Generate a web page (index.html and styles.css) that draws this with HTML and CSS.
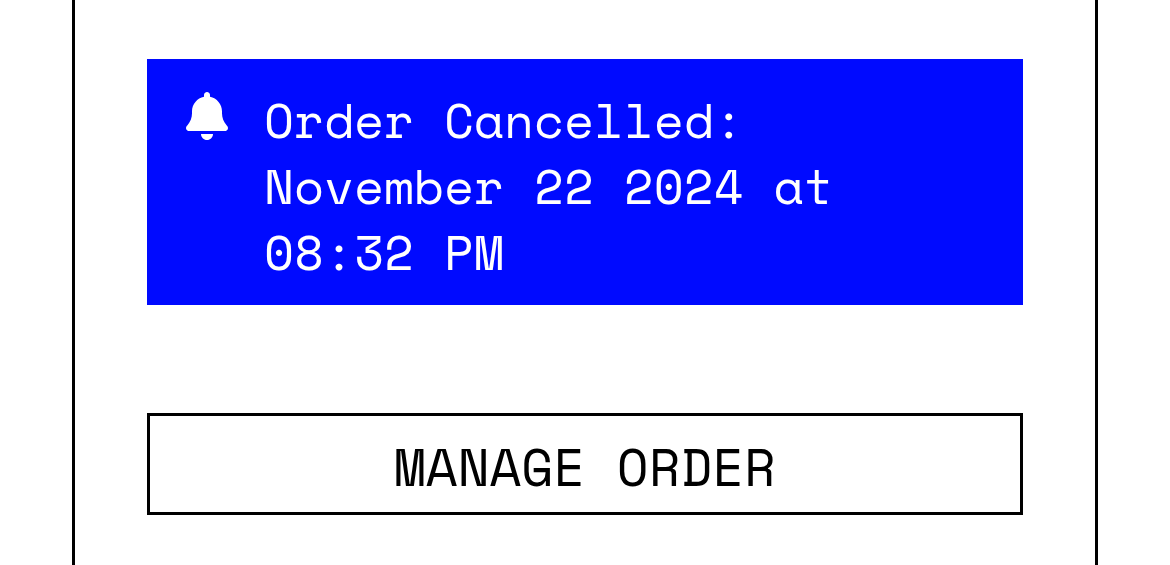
FILE: index.html
```html
<!DOCTYPE html>
<html lang="en">
<head>
    <meta charset="UTF-8">
    <meta name="viewport" content="width=device-width, initial-scale=1.0">
    <title>Order Status</title>
    <link rel="stylesheet" href="styles.css">
</head>
<body>

<main class="order-panel">
    <div class="notice" role="status">
        <svg class="notice-icon" xmlns="http://www.w3.org/2000/svg" viewBox="0 0 448 512" aria-hidden="true">
            <path d="M224 0c-17.7 0-32 14.3-32 32V51.2C119 66 64 130.6 64 208v18.8c0 47-17.3 92.4-48.5 127.6l-7.4 8.3c-8.4 9.4-10.4 22.9-5.3 34.4S19.4 416 32 416H416c12.6 0 24-7.4 29.2-18.9s3.1-25-5.3-34.4l-7.4-8.3C401.3 319.2 384 273.9 384 226.8V208c0-77.4-55-142-128-156.8V32c0-17.7-14.3-32-32-32zm45.3 493.3c12-12 18.7-28.3 18.7-45.3H224 160c0 17 6.7 33.3 18.7 45.3s28.3 18.7 45.3 18.7s33.3-6.7 45.3-18.7z"/>
        </svg>
        <p class="notice-text">Order Cancelled: November 22 2024 at 08:32 PM</p>
    </div>
    <button class="manage-btn" type="button">MANAGE ORDER</button>
</main>

</body>
</html>
```

FILE: styles.css
```css
* {
    margin: 0;
    padding: 0;
    box-sizing: border-box;
}
body {
    font-family: "Space Mono", "Liberation Mono", monospace;
    background-color: #fff;
    color: #000;
}
.order-panel {
    display: flex;
    flex-direction: column;
    gap: 108px;
    min-height: 100vh;
    margin: 0 72px;
    padding: 59px 72px 50px;
    border-left: 3px solid #000;
    border-right: 3px solid #000;
}
.notice {
    display: flex;
    align-items: flex-start;
    gap: 36px;
    padding: 28px 39px 20px;
    background-color: #000aff;
    color: #fff;
}
.notice-icon {
    flex-shrink: 0;
    width: 42px;
    height: 48px;
    margin-top: 5px;
    fill: currentColor;
}
.notice-text {
    font-size: 49px;
    line-height: 66px;
}
.manage-btn {
    width: 100%;
    padding: 18px 24px 12px;
    border: 3px solid #000;
    background: #fff;
    color: #000;
    font-family: inherit;
    font-size: 52px;
    line-height: 66px;
    cursor: pointer;
}
```
